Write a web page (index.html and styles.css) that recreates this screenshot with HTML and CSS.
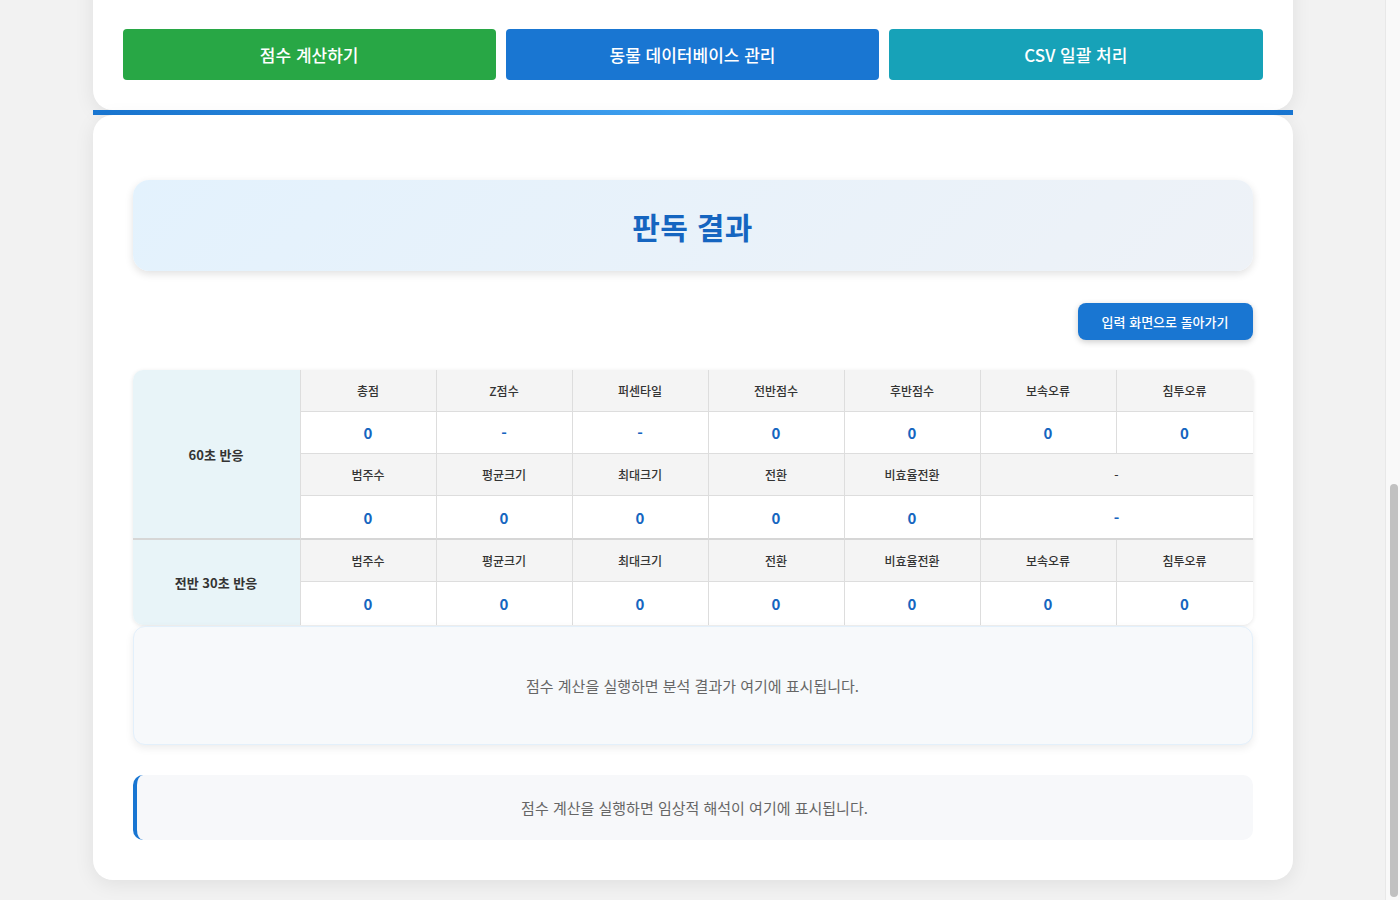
FILE: index.html
```html
<!DOCTYPE html>
<html lang="ko">
<head>
<meta charset="utf-8">
<title>판독 결과</title>
<link rel="stylesheet" href="styles.css">
</head>
<body>
<div class="viewport">
<div class="container">
  <section class="card input-card">
    <div class="input-area"></div>
    <div class="action-row">
      <button class="btn btn-green">점수 계산하기</button>
      <button class="btn btn-blue">동물 데이터베이스 관리</button>
      <button class="btn btn-teal">CSV 일괄 처리</button>
    </div>
  </section>
  <div class="accent-bar"></div>
  <section class="card result-card">
    <div class="title-box"><h2>판독 결과</h2></div>
    <div class="back-row"><button class="back-btn">입력 화면으로 돌아가기</button></div>
    <table class="score-table">
      <tbody>
        <tr class="head">
          <td class="label" rowspan="4">60초 반응</td>
          <td>총점</td><td>Z점수</td><td>퍼센타일</td><td>전반점수</td><td>후반점수</td><td>보속오류</td><td>침투오류</td>
        </tr>
        <tr class="val">
          <td>0</td><td>-</td><td>-</td><td>0</td><td>0</td><td>0</td><td>0</td>
        </tr>
        <tr class="head">
          <td>범주수</td><td>평균크기</td><td>최대크기</td><td>전환</td><td>비효율전환</td><td colspan="2">-</td>
        </tr>
        <tr class="val end">
          <td>0</td><td>0</td><td>0</td><td>0</td><td>0</td><td colspan="2">-</td>
        </tr>
        <tr class="head second">
          <td class="label" rowspan="2">전반 30초 반응</td>
          <td>범주수</td><td>평균크기</td><td>최대크기</td><td>전환</td><td>비효율전환</td><td>보속오류</td><td>침투오류</td>
        </tr>
        <tr class="val last">
          <td>0</td><td>0</td><td>0</td><td>0</td><td>0</td><td>0</td><td>0</td>
        </tr>
      </tbody>
    </table>
    <div class="result-box">점수 계산을 실행하면 분석 결과가 여기에 표시됩니다.</div>
    <div class="interp-box">점수 계산을 실행하면 임상적 해석이 여기에 표시됩니다.</div>
  </section>
</div>
</div>
<div class="scrollbar"><div class="thumb"></div></div>
</body>
</html>
```
FILE: styles.css
```css
* { box-sizing: border-box; }
html, body { margin: 0; padding: 0; height: 100%; overflow: hidden; }
body {
  background: #f2f2f2;
  font-family: "Noto Sans CJK KR", "Noto Sans", sans-serif;
  color: #333;
  display: flex;
}
.viewport {
  flex: 1;
  height: 100vh;
  overflow: hidden;
  display: flex;
  flex-direction: column;
  justify-content: flex-end;
  padding-bottom: 20px;
}
.scrollbar {
  width: 15px;
  height: 100vh;
  background: #f9f9f9;
  border-left: 1px solid #e8e8e8;
  display: flex;
  flex-direction: column;
  justify-content: flex-end;
  align-items: center;
  padding-bottom: 3px;
}
.thumb {
  width: 8px;
  height: 413px;
  margin-left: 1px;
  background: #c1c1c1;
  border-radius: 4px;
}
.container {
  width: 1200px;
  margin: 0 auto;
  flex-shrink: 0;
}
.card {
  background: #fff;
  box-shadow: 0 4px 20px rgba(0,0,0,0.08);
}
.input-card {
  border-radius: 20px;
  padding: 30px;
}
.input-area { height: 300px; }
.action-row {
  display: grid;
  grid-template-columns: repeat(3, 1fr);
  gap: 10px;
}
.btn {
  height: 51px;
  border: none;
  border-radius: 4px;
  color: #fff;
  font-family: inherit;
  font-size: 17px;
  font-weight: 500;
}
.btn-green { background: #28a745; }
.btn-blue { background: #1976d2; }
.btn-teal { background: #17a2b8; }
.accent-bar {
  height: 5px;
  background: linear-gradient(90deg, #1976d2 0%, #42a5f5 50%, #1976d2 100%);
}
.result-card {
  border-radius: 20px;
  padding: 65px 40px 40px;
}
.title-box {
  height: 91px;
  border-radius: 16px;
  background: linear-gradient(135deg, #e3f2fd 0%, #eef2f7 100%);
  box-shadow: 0 3px 8px rgba(0,0,0,0.12);
  display: flex;
  align-items: center;
  justify-content: center;
}
.title-box h2 {
  margin: 0;
  font-size: 30px;
  font-weight: 700;
  color: #1565c0;
  letter-spacing: 0.3px;
}
.back-row {
  display: flex;
  justify-content: flex-end;
  margin: 32px 0 30px;
}
.back-btn {
  height: 37px;
  padding: 0 24px;
  border: none;
  border-radius: 8px;
  background: #1976d2;
  color: #fff;
  font-family: inherit;
  font-size: 13px;
  font-weight: 500;
  box-shadow: 0 2px 6px rgba(0,0,0,0.2);
}
.score-table {
  width: 100%;
  border-collapse: separate;
  border-spacing: 0;
  table-layout: fixed;
  border-radius: 10px;
  box-shadow: 0 1px 4px rgba(0,0,0,0.1);
  overflow: hidden;
}
.score-table td {
  border-right: 1px solid #ddd;
  border-bottom: 1px solid #ddd;
  text-align: center;
  padding: 0;
}
.score-table td:last-child { border-right: none; }
.score-table tr.last td { border-bottom: none; }
.score-table td.label {
  width: 168px;
  background: #e8f4f8;
  font-size: 13px;
  font-weight: 700;
  color: #333;
  border-bottom: 2px solid #d6d6d6;
}
.head td {
  height: 42px;
  background: #f4f4f4;
  font-size: 12px;
  color: #333;
  font-weight: 500;
}
.head td.label { background: #e8f4f8; }
.head.second td.label { border-bottom: none; }
.val td {
  height: 42px;
  background: #fff;
  font-size: 15px;
  font-weight: 700;
  color: #1565c0;
}
.val.end td { border-bottom: 2px solid #d6d6d6; height: 44px; }
.val.last td { height: 43px; }
.result-box {
  height: 119px;
  margin-top: 1px;
  display: flex;
  align-items: center;
  justify-content: center;
  background: #f7f9fb;
  border: 1px solid #e3f0fb;
  border-radius: 12px;
  box-shadow: 0 3px 8px rgba(0,0,0,0.08);
  font-size: 15px;
  color: #666;
}
.interp-box {
  margin-top: 30px;
  height: 65px;
  display: flex;
  align-items: center;
  justify-content: center;
  background: #f7f8fa;
  border-left: 4px solid #1976d2;
  border-radius: 10px;
  font-size: 15px;
  color: #666;
}
```
